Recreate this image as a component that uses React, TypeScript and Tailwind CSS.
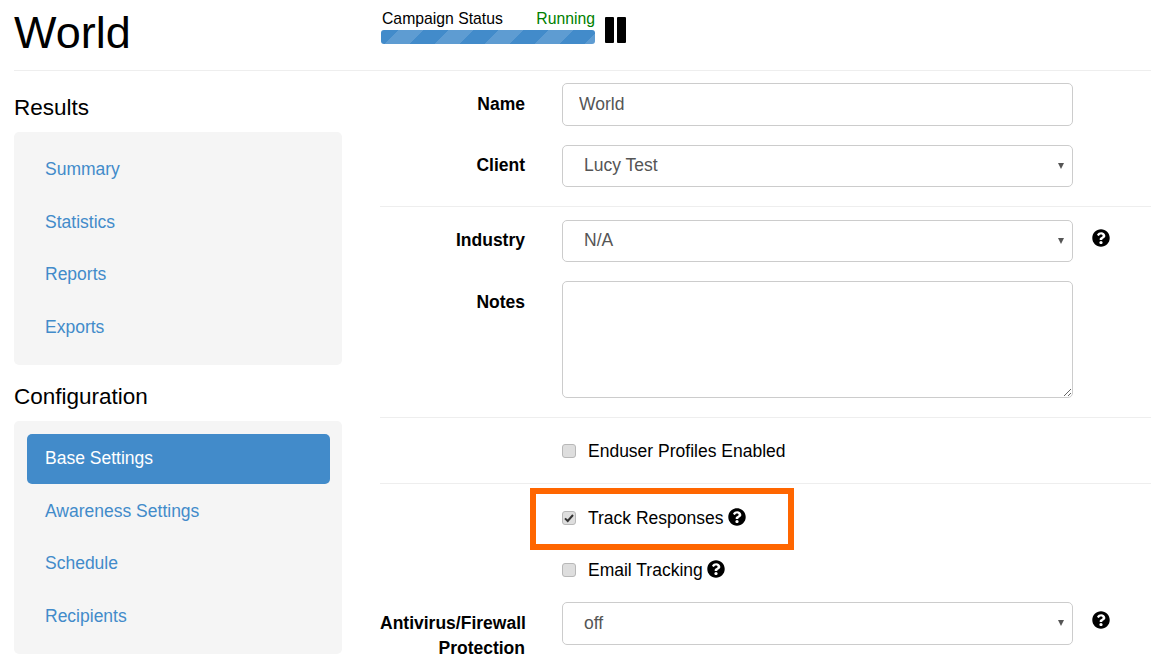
import type { ReactNode } from "react";
import { FaQuestionCircle } from "react-icons/fa";

const results = ["Summary", "Statistics", "Reports", "Exports"];
const configuration = ["Base Settings", "Awareness Settings", "Schedule", "Recipients"];

function SideNav({ items, active }: { items: string[]; active?: string }) {
  return (
    <div className="flex flex-col gap-[2.6px] rounded-[5px] bg-[#f5f5f5] pt-[13.4px] pr-[12px] pb-[11.6px] pl-[13px]">
      {items.map((item) => (
        <a
          key={item}
          className={`flex h-[50px] items-center rounded-[5px] px-[18px] pb-[2px] text-[17.5px] ${
            item === active ? "bg-[#428bca] text-white" : "text-[#428bca]"
          }`}
        >
          {item}
        </a>
      ))}
    </div>
  );
}

function Row({
  label,
  children,
  help,
  className = "",
  labelClass = "pt-[9px]",
}: {
  label?: ReactNode;
  children: ReactNode;
  help?: boolean;
  className?: string;
  labelClass?: string;
}) {
  return (
    <div className={`flex items-start ${className}`}>
      <div className={`w-[145px] shrink-0 text-right text-[17.5px] leading-[25px] font-bold text-black ${labelClass}`}>{label}</div>
      <div className="ml-[37px] w-[511px] shrink-0">{children}</div>
      {help && <FaQuestionCircle className="mt-[9px] ml-[19px] text-[18px] text-black" />}
    </div>
  );
}

function SelectBox({ value, height = "h-[42px] pb-[2px]" }: { value: string; height?: string }) {
  return (
    <div className="relative">
      <select
        defaultValue={value}
        className={`${height} w-full appearance-none rounded-[5px] border border-[#cccccc] bg-white px-[21px] text-[17.5px] text-[#555555] outline-none`}
      >
        <option>{value}</option>
      </select>
      <span className="absolute top-[18px] right-[9px] h-0 w-0 border-x-[3.5px] border-t-[6px] border-x-transparent border-t-[#555555]" />
    </div>
  );
}

function CheckRow({ label, checked, help }: { label: string; checked?: boolean; help?: boolean }) {
  return (
    <label className="flex h-[26px] items-center text-[17.5px] text-black">
      <span className="relative block h-[14px] w-[14px] shrink-0">
        <input
          type="checkbox"
          disabled
          defaultChecked={checked}
          className="m-0 block h-[14px] w-[14px] appearance-none rounded-[3px] border border-[#b8b8b8] bg-[#dedede]"
        />
        {checked && (
          <svg viewBox="0 0 14 14" className="absolute inset-0 h-[14px] w-[14px]">
            <path d="M3 7.4 L5.7 10 L11 4" fill="none" stroke="#333333" strokeWidth="2" />
          </svg>
        )}
      </span>
      <span className="ml-[12px]">{label}</span>
      {help && <FaQuestionCircle className="ml-[4px] -translate-y-[1px] text-[18px] text-black" />}
    </label>
  );
}

export default function App() {
  return (
    <div className="h-[660px] w-[1151px] overflow-hidden bg-white font-['Liberation_Sans',Arial,sans-serif] text-black">
      <div className="ml-[14px] flex h-[71px] border-b border-[#eeeeee]">
        <h1 className="w-[367px] pt-[8px] text-[45px] leading-[49px] font-normal">World</h1>
        <div className="w-[214px] pt-[10px]">
          <div className="flex justify-between pl-[1px] text-[15.75px] leading-[18px]">
            <span>Campaign Status</span>
            <span className="text-[#008000]">Running</span>
          </div>
          <div className="mt-[2px] h-[14px] w-[214px] rounded-[3px] bg-[#428bca] bg-[linear-gradient(135deg,rgba(255,255,255,0.15)_25%,transparent_25%,transparent_50%,rgba(255,255,255,0.15)_50%,rgba(255,255,255,0.15)_75%,transparent_75%,transparent)] bg-[length:50px_50px] bg-[position:18px_0]" />
        </div>
        <div className="mt-[17px] ml-[10px] flex h-[26px] gap-[3px]">
          <span className="w-[9px] rounded-[1px] bg-black" />
          <span className="w-[9px] rounded-[1px] bg-black" />
        </div>
      </div>

      <div className="flex">
        <div className="ml-[14px] w-[328px] shrink-0">
          <h3 className="mt-[23px] mb-[11px] text-[22.5px] leading-[27px] font-normal">Results</h3>
          <SideNav items={results} />
          <h3 className="mt-[18px] mb-[11px] text-[22.5px] leading-[27px] font-normal">Configuration</h3>
          <SideNav items={configuration} active="Base Settings" />
        </div>

        <div className="ml-[38px] flex-1 pt-[12px]">
          <Row label="Name">
            <input
              defaultValue="World"
              className="h-[43px] w-full rounded-[5px] border border-[#cccccc] px-[16px] text-[17.5px] text-[#555555] outline-none"
            />
          </Row>
          <Row label="Client" className="mt-[19px]" labelClass="pt-[8px]">
            <SelectBox value="Lucy Test" />
          </Row>
          <div className="mt-[19px] border-t border-[#eeeeee]" />
          <Row label="Industry" help className="mt-[13px]" labelClass="pt-[8px]">
            <SelectBox value="N/A" />
          </Row>
          <Row label="Notes" className="mt-[19px]">
            <textarea className="block h-[117px] w-full rounded-[5px] border border-[#cccccc] outline-none" />
          </Row>
          <div className="mt-[19px] border-t border-[#eeeeee]" />
          <Row className="mt-[20px]">
            <CheckRow label="Enduser Profiles Enabled" />
          </Row>
          <div className="mt-[19px] border-t border-[#eeeeee]" />
          <Row className="relative mt-[21px]">
            <CheckRow label="Track Responses" checked help />
            <div className="absolute -top-[17px] left-[150px] h-[62px] w-[264px] border-[6px] border-[#ff6600]" />
          </Row>
          <Row className="mt-[26px]">
            <CheckRow label="Email Tracking" help />
          </Row>
          <Row label={<>Antivirus/Firewall Protection</>} help className="mt-[19px]">
            <SelectBox value="off" height="h-[43px]" />
          </Row>
        </div>
      </div>
    </div>
  );
}
